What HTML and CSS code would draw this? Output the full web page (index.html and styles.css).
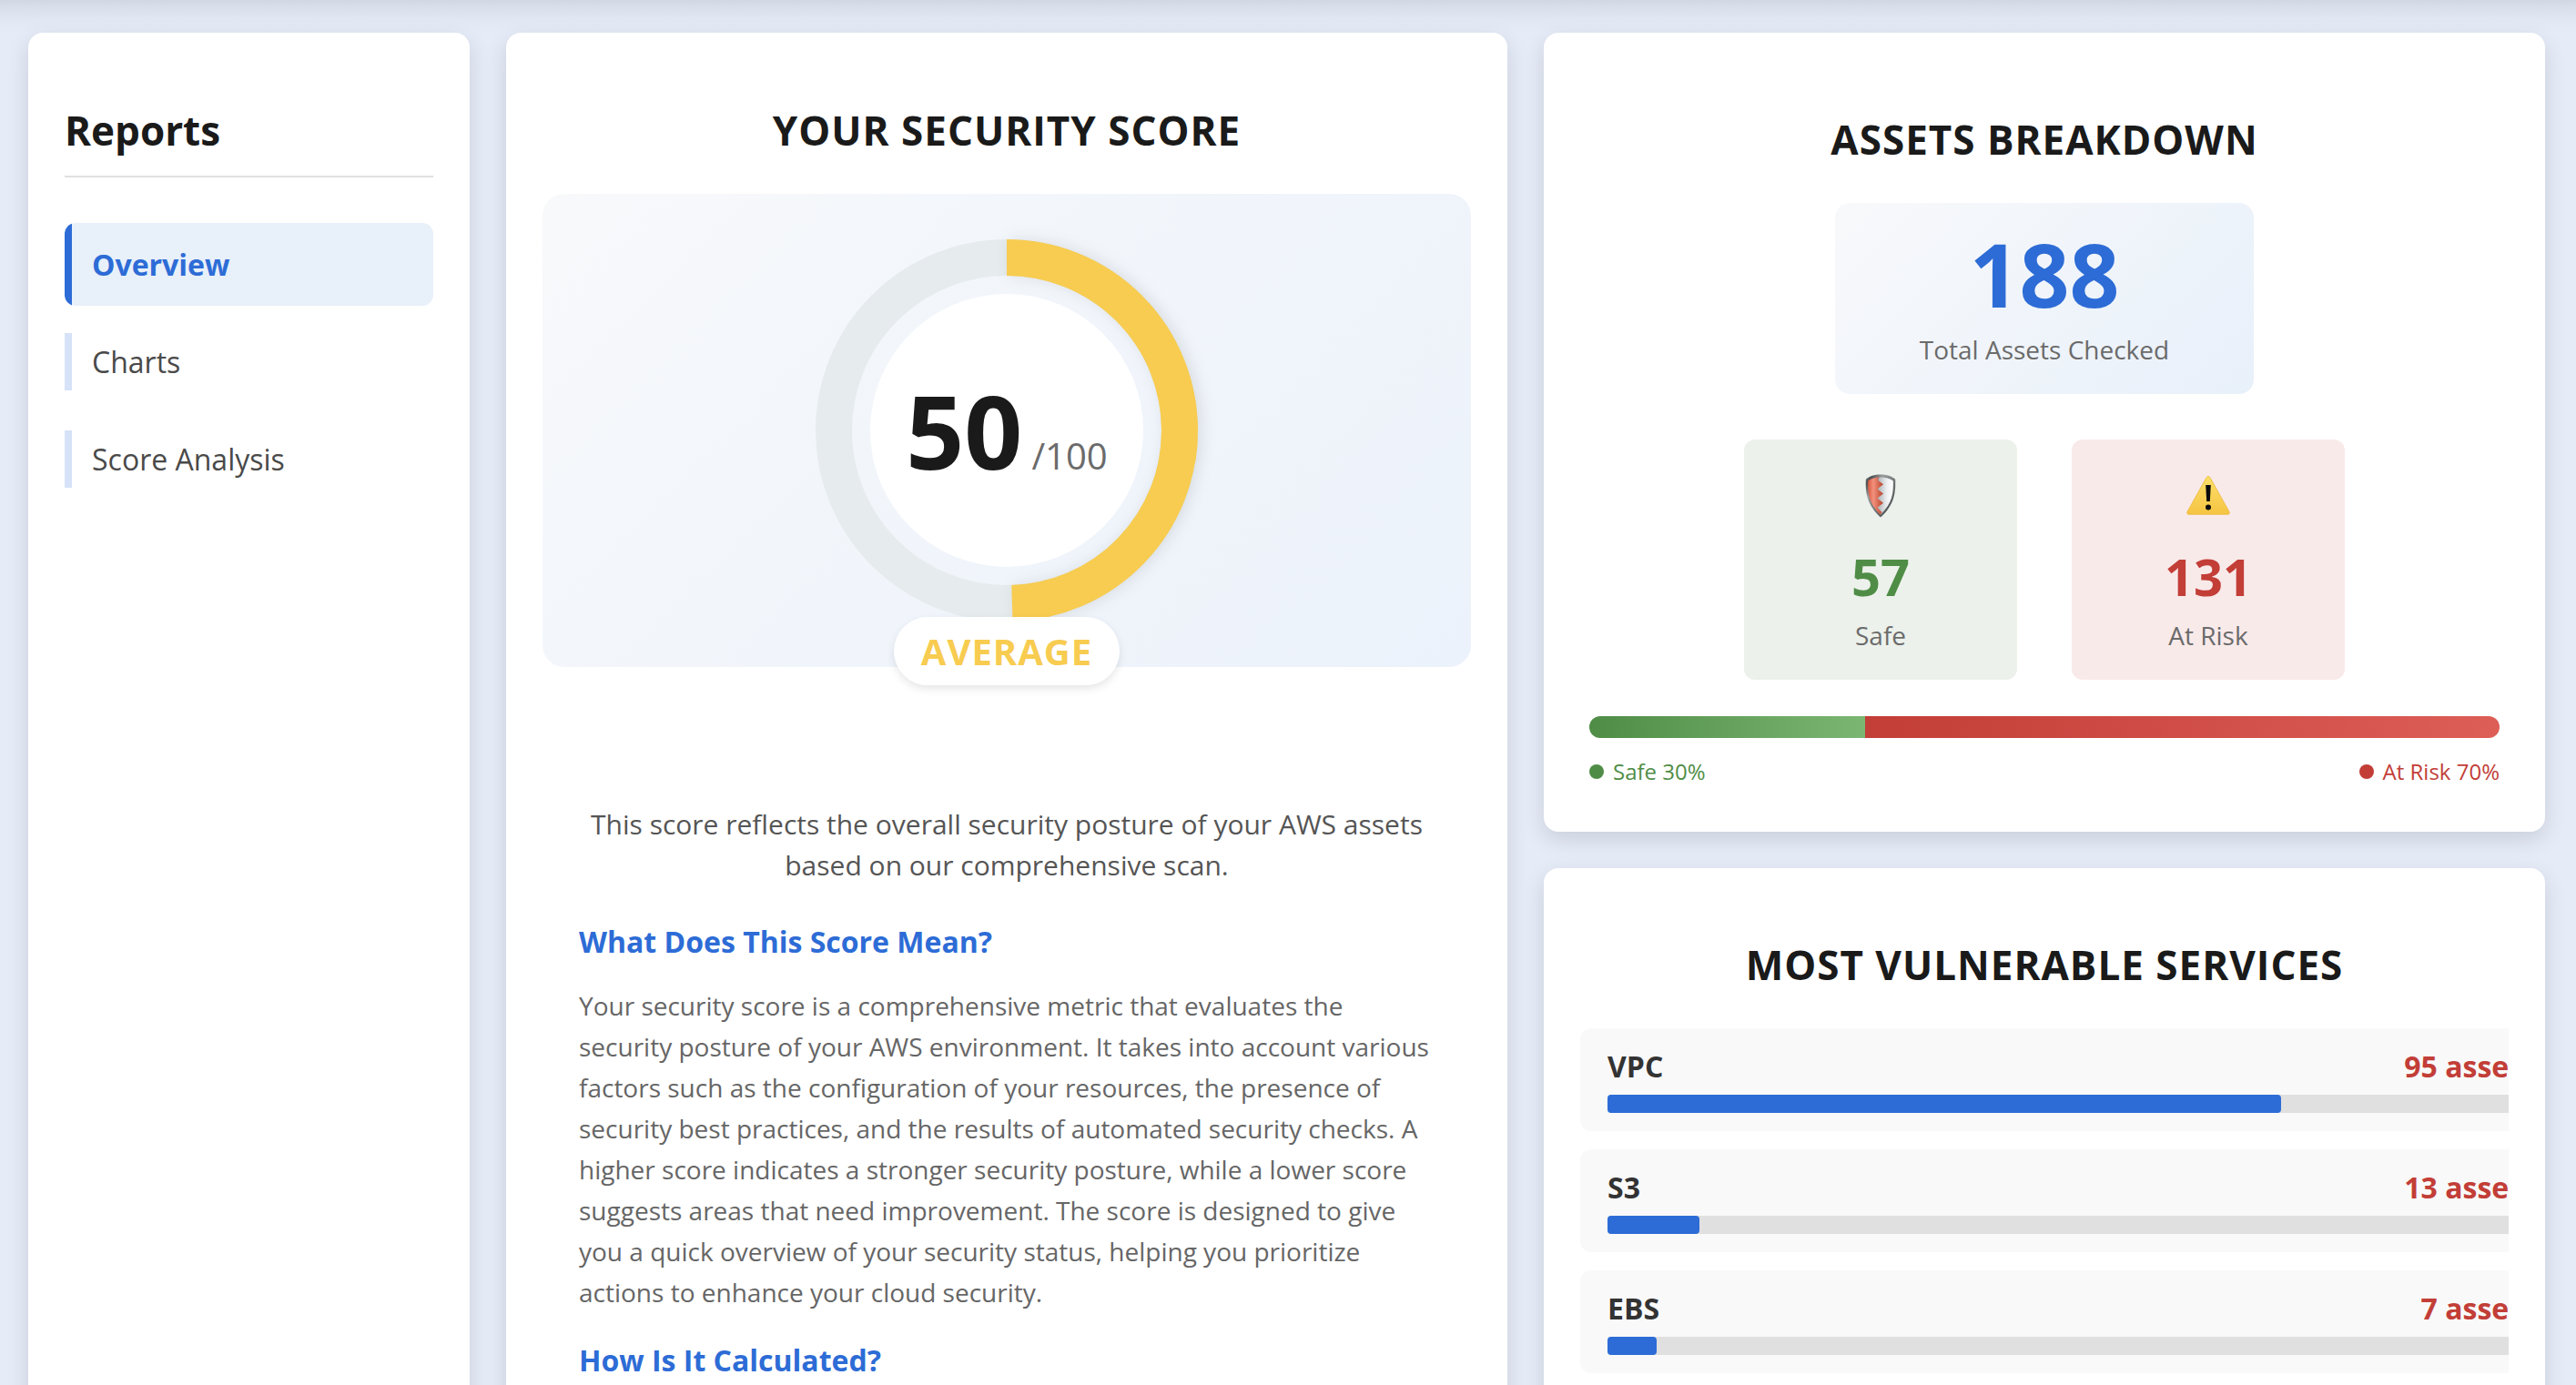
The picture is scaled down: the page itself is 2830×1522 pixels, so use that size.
FILE: index.html
```html
<!DOCTYPE html>
<html lang="en">
<head>
<meta charset="utf-8">
<title>Security Report Overview</title>
<link rel="stylesheet" href="styles.css">
</head>
<body>
<div class="dashboard">
  <nav class="card sidebar" aria-label="Reports">
    <h2 class="sidebar-title">Reports</h2>
    <ul class="nav-list">
      <li><a class="nav-link is-active" href="#overview" aria-current="page">Overview</a></li>
      <li><a class="nav-link" href="#charts">Charts</a></li>
      <li><a class="nav-link" href="#analysis">Score Analysis</a></li>
    </ul>
  </nav>

  <main class="card score-card" id="overview">
    <h2 class="card-title">YOUR SECURITY SCORE</h2>
    <div class="score-hero">
      <div class="gauge">
        <svg class="gauge-ring" viewBox="0 0 420 420" aria-hidden="true">
          <circle class="ring-track" cx="210" cy="210" r="190"/>
          <circle class="ring-value" cx="210" cy="210" r="190" pathLength="1000" stroke-dasharray="495 1000" transform="rotate(-90 210 210)"/>
        </svg>
        <p class="gauge-text"><span class="gauge-score">50</span> <span class="gauge-max">/100</span></p>
      </div>
      <span class="rating">AVERAGE</span>
    </div>
    <div class="score-copy">
      <p class="intro">This score reflects the overall security posture of your AWS assets based on our comprehensive scan.</p>
      <h3 class="copy-title">What Does This Score Mean?</h3>
      <p class="copy-text">Your security score is a comprehensive metric that evaluates the security posture of your AWS environment. It takes into account various factors such as the configuration of your resources, the presence of security best practices, and the results of automated security checks. A higher score indicates a stronger security posture, while a lower score suggests areas that need improvement. The score is designed to give you a quick overview of your security status, helping you prioritize actions to enhance your cloud security.</p>
      <h3 class="copy-title">How Is It Calculated?</h3>
    </div>
  </main>

  <div class="side-column">
    <section class="card assets-card">
      <h2 class="card-title">ASSETS BREAKDOWN</h2>
      <div class="total-box">
        <p class="total-number">188</p>
        <p class="stat-label">Total Assets Checked</p>
      </div>
      <div class="stat-row">
        <div class="stat stat-safe">
          <svg class="stat-icon" viewBox="0 0 48 48" aria-hidden="true">
            <defs>
              <linearGradient id="rim" x1="0" y1="0" x2="1" y2="1">
                <stop offset="0" stop-color="#8a8d8e"/><stop offset=".12" stop-color="#4c4f50"/><stop offset=".3" stop-color="#9b9e9f"/><stop offset=".6" stop-color="#6d7071"/><stop offset="1" stop-color="#3f4243"/>
              </linearGradient>
              <linearGradient id="red" x1="0" y1="0" x2="1" y2="0">
                <stop offset="0" stop-color="#d9583f"/><stop offset=".35" stop-color="#f3917c"/><stop offset="1" stop-color="#b8432b"/>
              </linearGradient>
              <linearGradient id="silver" x1="0" y1="0" x2="1" y2="0">
                <stop offset="0" stop-color="#a9adb1"/><stop offset=".6" stop-color="#eceef0"/><stop offset="1" stop-color="#ffffff"/>
              </linearGradient>
            </defs>
            <path fill="url(#rim)" d="M24 .5c6.500 0 12.500 1.800 16.200 5.300.5 15-1.200 28.200-16.200 41.700C9 34 7.300 20.800 7.800 5.800 11.500 2.300 17.500.5 24 .5z"/>
            <path fill="url(#silver)" d="M22 3.500c6.500-.2 12.300 1.200 15.800 4C38.200 20.500 37 32 24 44.500L20 36z"/>
            <path fill="url(#red)" d="M10.200 7.500C13.300 5 17.500 3.700 23 3.500l-2.500 2.800 6.500 5-6.500 5 6.500 5.200-6.500 5 6.500 5.200-6.500 5 5 5.200-2 2.600C11.500 32.500 9.700 20.500 10.200 7.500z"/>
          </svg>
          <p class="stat-number">57</p>
          <p class="stat-label">Safe</p>
        </div>
        <div class="stat stat-risk">
          <svg class="stat-icon" viewBox="0 0 48 48" aria-hidden="true">
            <defs>
              <linearGradient id="warn" x1="0" y1="0" x2="0" y2="1">
                <stop offset="0" stop-color="#fbe069"/><stop offset="1" stop-color="#f6c443"/>
              </linearGradient>
            </defs>
            <path fill="url(#warn)" stroke="#efbe4b" stroke-width="1" d="M22.200 3.500c.8-1.500 2.800-1.500 3.600 0l21.300 38c.7 1.300-.1 2.700-1.600 2.700h-43C1 44.200.2 42.800.9 41.500z"/>
            <path fill="#0b0b0b" d="M21.200 12h5.600l-1 18h-3.600z"/>
            <circle fill="#0b0b0b" cx="24" cy="36.500" r="3"/>
          </svg>
          <p class="stat-number">131</p>
          <p class="stat-label">At Risk</p>
        </div>
      </div>
      <div class="split-bar">
        <div class="split-safe" style="width: 30.320%"></div>
        <div class="split-risk"></div>
      </div>
      <div class="legend">
        <span class="legend-item legend-safe">Safe 30%</span>
        <span class="legend-item legend-risk">At Risk 70%</span>
      </div>
    </section>

    <section class="card services-card">
      <h2 class="card-title">MOST VULNERABLE SERVICES</h2>
      <ul class="service-list">
        <li class="service">
          <div class="service-head"><span>VPC</span><span class="service-count">95 assets</span></div>
          <div class="track"><div class="track-fill" style="width: 72.520%"></div></div>
        </li>
        <li class="service">
          <div class="service-head"><span>S3</span><span class="service-count">13 assets</span></div>
          <div class="track"><div class="track-fill" style="width: 9.920%"></div></div>
        </li>
        <li class="service">
          <div class="service-head"><span>EBS</span><span class="service-count">7 assets</span></div>
          <div class="track"><div class="track-fill" style="width: 5.340%"></div></div>
        </li>
      </ul>
    </section>
  </div>
</div>
</body>
</html>
```

FILE: styles.css
```css
* {
  box-sizing: border-box;
}

html,
body {
  height: 100%;
}

body {
  margin: 0;
  overflow: hidden;
  background: #e5ebf7;
  color: #1a1a1a;
  font-family: "Open Sans", "Noto Sans", sans-serif;
}

h2,
h3,
p,
ul {
  margin: 0;
  padding: 0;
}

ul {
  list-style: none;
}

.dashboard {
  display: grid;
  grid-template-columns: 485px 1fr 1fr;
  gap: 40px;
  min-height: 100%;
  padding: 36px 34px 0 31px;
  background: linear-gradient(#d1d8e3 0, #dae1ec 10px, #e1e8f3 22px, #e5ebf7 36px);
}

.card {
  background: #fff;
  border-radius: 16px;
  box-shadow: 0 8px 24px rgba(0, 0, 0, 0.12);
}

.card-title {
  font-size: 44px;
  line-height: 60px;
  font-weight: 700;
  letter-spacing: 1px;
  text-align: center;
}

/* Sidebar */
.sidebar {
  padding: 77px 40px 40px;
}

.sidebar-title {
  padding-bottom: 20px;
  border-bottom: 2px solid #e0e0e0;
  font-size: 44px;
  line-height: 60px;
}

.nav-list {
  display: flex;
  flex-direction: column;
  gap: 16px;
  padding-top: 50px;
}

.nav-link {
  display: block;
  margin: 14px 0;
  padding: 8px 30px;
  background: linear-gradient(90deg, #d6e2f8 8px, transparent 8px);
  color: #4a4a4a;
  font-size: 32px;
  line-height: 47px;
  text-decoration: none;
}

.nav-link.is-active {
  margin: 0;
  padding: 22px 30px;
  border-radius: 12px;
  background: linear-gradient(90deg, #2d6cd6 8px, #e8f0fa 8px);
  color: #2d6cd6;
  font-weight: 700;
}

/* Score */
.score-card {
  padding: 77px 40px 40px;
}

.score-hero {
  position: relative;
  display: flex;
  justify-content: center;
  margin-top: 40px;
  padding: 50px;
  border-radius: 24px;
  background: linear-gradient(135deg, #f8f9fb 0%, #f2f6fb 40%, #ecf2fb 100%);
}

.gauge {
  display: grid;
  place-items: center;
}

.gauge > * {
  grid-area: 1 / 1;
}

.gauge-ring {
  width: 420px;
  height: 420px;
  overflow: visible;
}

.gauge-ring circle {
  fill: none;
  stroke-width: 40;
}

.gauge-ring .ring-track {
  stroke: #e6ecee;
}

.gauge-ring .ring-value {
  stroke: #f7cc50;
  filter: drop-shadow(0 4px 8px rgba(0, 0, 0, 0.1));
}

.gauge-text {
  display: flex;
  align-items: baseline;
  justify-content: center;
  gap: 10px;
  width: 300px;
  height: 300px;
  border-radius: 50%;
  background: #fff;
  line-height: 300px;
}

.gauge-score {
  font-size: 112px;
  font-weight: 700;
}

.gauge-max {
  color: #6b6b6b;
  font-size: 40px;
}

.rating {
  position: absolute;
  bottom: -20px;
  padding: 10px 30px;
  border-radius: 38px;
  background: rgba(255, 255, 255, 0.95);
  box-shadow: 0 4px 10px rgba(0, 0, 0, 0.1);
  color: #f7cc50;
  font-size: 40px;
  line-height: 55px;
  font-weight: 700;
  letter-spacing: 1px;
}

.score-copy {
  padding: 150px 40px 0;
}

.intro {
  margin-bottom: 40px;
  color: #555;
  font-size: 30px;
  line-height: 45px;
  text-align: center;
}

.copy-title {
  margin: 30px 0 26px;
  color: #2d6cd6;
  font-size: 32px;
  line-height: 44px;
}

.copy-text {
  color: #666;
  font-size: 28px;
  line-height: 45px;
}

/* Right column */
.side-column {
  display: flex;
  flex-direction: column;
  gap: 40px;
}

.assets-card {
  display: flex;
  flex-direction: column;
  align-items: center;
  padding: 87px 50px 50px;
}

.total-box {
  width: 460px;
  margin-top: 40px;
  padding: 30px 20px;
  border-radius: 16px;
  background: linear-gradient(135deg, #f8f9fb 0%, #e8f0fa 100%);
  text-align: center;
}

.total-number {
  color: #2d6cd6;
  font-size: 96px;
  line-height: 96px;
  font-weight: 700;
}

.stat-label {
  color: #6b6b6b;
  font-size: 28px;
  line-height: 38px;
}

.total-box .stat-label {
  margin-top: 16px;
}

.stat-row {
  display: flex;
  gap: 60px;
  margin: 50px 0 40px;
}

.stat {
  display: flex;
  flex-direction: column;
  align-items: center;
  width: 300px;
  padding: 38px 20px 30px;
  border-radius: 12px;
}

.stat-icon {
  width: 48px;
  height: 48px;
}

.stat-number {
  margin: 26px 0 8px;
  font-size: 56px;
  line-height: 76px;
  font-weight: 700;
}

.stat-safe {
  background: #ecf1eb;
}

.stat-safe .stat-number {
  color: #4f8d46;
}

.stat-risk {
  background: #f9eaea;
}

.stat-risk .stat-number {
  color: #c23e37;
}

.split-bar {
  display: flex;
  align-self: stretch;
  height: 24px;
  border-radius: 12px;
  overflow: hidden;
}

.split-safe {
  background: linear-gradient(90deg, #4f8d46, #7bb673);
}

.split-risk {
  flex: 1;
  background: linear-gradient(90deg, #c23e37, #dd5e57);
}

.legend {
  display: flex;
  align-self: stretch;
  justify-content: space-between;
  margin-top: 20px;
  font-size: 24px;
  line-height: 33px;
}

.legend-item {
  display: flex;
  align-items: center;
  gap: 10px;
}

.legend-item::before {
  content: "";
  width: 16px;
  height: 16px;
  border-radius: 50%;
  background: currentColor;
}

.legend-safe {
  color: #4f8d46;
}

.legend-risk {
  color: #c23e37;
}

.services-card {
  flex: 1;
  padding: 76px 40px 40px;
}

/* Rows run wider than the list, which cuts them off at its right edge */
.service-list {
  display: flex;
  flex-direction: column;
  gap: 20px;
  margin-top: 40px;
  overflow: hidden;
}

.service {
  box-sizing: content-box;
  width: 100%;
  padding: 20px 30px;
  border-radius: 12px;
  background: #f9f9f9;
}

.service-head {
  display: flex;
  justify-content: space-between;
  margin-bottom: 9px;
  color: #333;
  font-size: 32px;
  line-height: 44px;
  font-weight: 700;
}

.service-count {
  color: #c23e37;
}

.track {
  height: 20px;
  border-radius: 4px;
  background: #e0e0e0;
}

.track-fill {
  height: 100%;
  border-radius: 4px;
  background: #2d6cd6;
}
```
